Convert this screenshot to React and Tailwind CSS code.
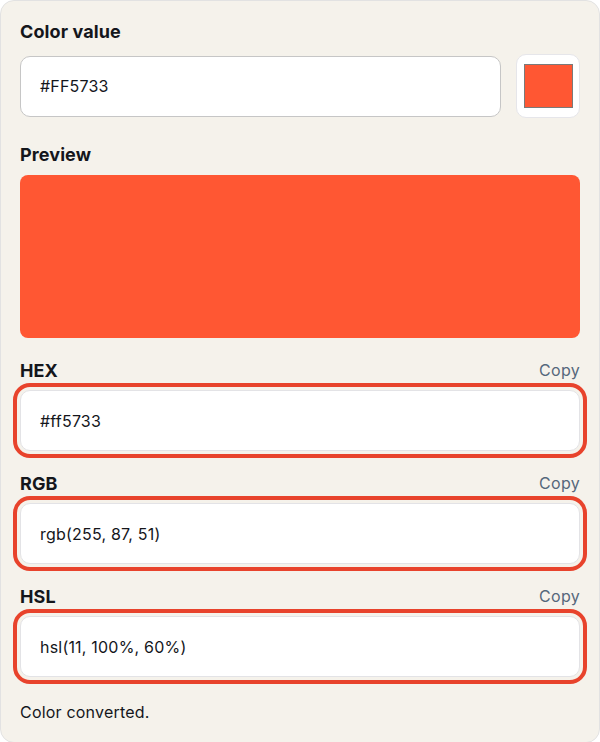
import React from "react";

const font = { fontFamily: "Inter, 'Noto Sans', sans-serif" };

function Field({ label, value }) {
  return (
    <div className="flex flex-col">
      <div className="flex items-center justify-between h-6">
        <span className="text-[18px] font-bold text-[#14161b] tracking-[0.1px]">{label}</span>
        <span className="text-[16px] text-[#56677b] tracking-[0.3px]">Copy</span>
      </div>
      <div className="mt-2 h-[61px] rounded-[10px] border border-[#e3e3e6] bg-white flex items-center px-[19px] text-[16px] text-[#14161b] tracking-[0.2px] outline-4 outline-offset-[3px] outline-[#e8432c]">
        {value}
      </div>
    </div>
  );
}

export default function App() {
  return (
    <div className="w-[600px] rounded-[14px] border border-[#e2e2e2] bg-[#f5f2eb] px-[19px] pt-[18px] pb-5" style={font}>
      <div className="h-6 flex items-center text-[18px] font-bold text-[#14161b] tracking-[0.1px]">Color value</div>
      <div className="mt-[11px] flex items-center gap-[15px]">
        <div className="flex-1 h-[61px] rounded-[10px] border border-[#c6c6c6] bg-white flex items-center px-[19px] text-[16px] text-[#14161b] tracking-[0.2px]">
          #FF5733
        </div>
        <div className="w-[64px] h-[64px] rounded-[10px] border border-[#e6e6ea] bg-white flex items-center justify-center">
          <div className="w-[49px] h-[44px] bg-[#FF5733] border border-[#7a7a7a]" />
        </div>
      </div>
      <div className="mt-[24px] h-6 flex items-center text-[18px] font-bold text-[#14161b] tracking-[0.1px]">Preview</div>
      <div className="mt-[9px] h-[163px] rounded-lg bg-[#FF5733]" />
      <div className="mt-5 flex flex-col gap-[20px]">
        <Field label="HEX" value="#ff5733" />
        <Field label="RGB" value="rgb(255, 87, 51)" />
        <Field label="HSL" value="hsl(11, 100%, 60%)" />
      </div>
      <div className="mt-[25px] h-5 flex items-center text-[16px] text-[#14161b] tracking-[0.2px]">Color converted.</div>
    </div>
  );
}
